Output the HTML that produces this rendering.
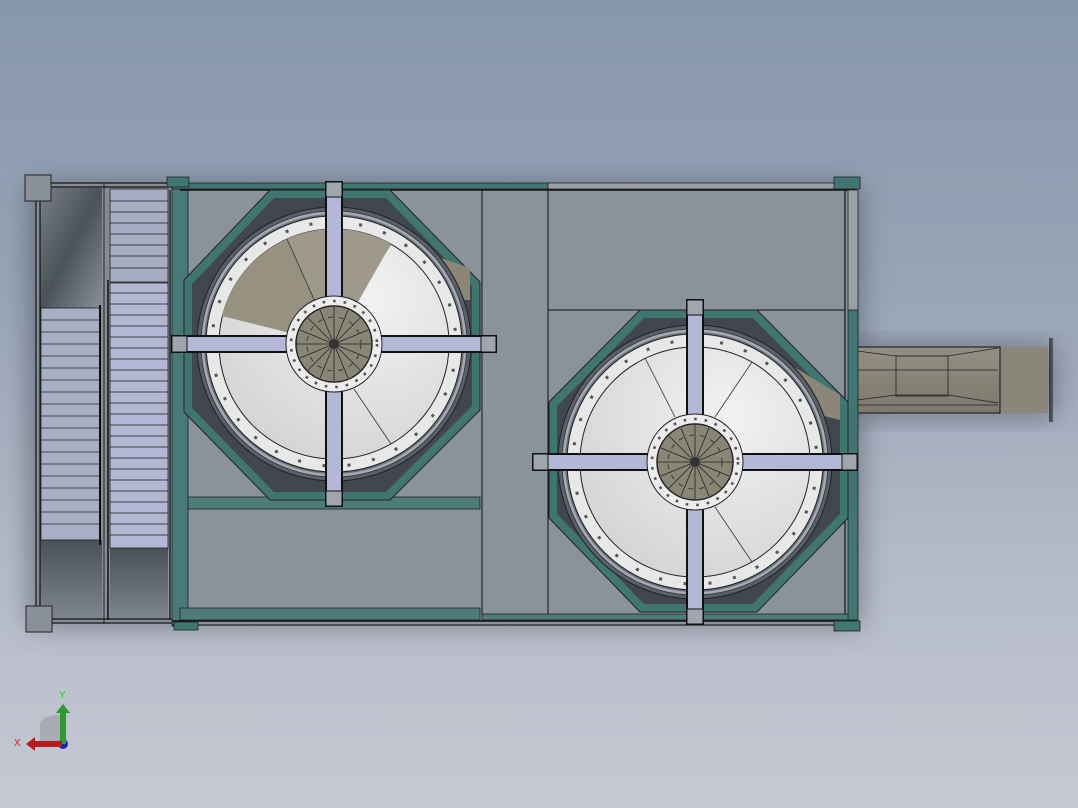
<!DOCTYPE html>
<html><head><meta charset="utf-8"><style>
html,body{margin:0;padding:0;width:1078px;height:808px;overflow:hidden;}
body{background:linear-gradient(180deg,#8797ac 0%,#98a4b6 35%,#b4bac8 70%,#c6c9d3 100%);}
svg{display:block;font-family:"Liberation Sans",sans-serif;}
</style></head><body>
<svg width="1078" height="808" viewBox="0 0 1078 808" xmlns="http://www.w3.org/2000/svg">
<defs>
<filter id="sh" x="-20%" y="-20%" width="140%" height="140%"><feGaussianBlur stdDeviation="14"/></filter>
<linearGradient id="dk" x1="0" y1="0" x2="1" y2="1"><stop offset="0" stop-color="#7a808a"/><stop offset="0.5" stop-color="#4c5259"/><stop offset="1" stop-color="#8a9099"/></linearGradient>
<linearGradient id="dk2" x1="0" y1="0" x2="0" y2="1"><stop offset="0" stop-color="#4a5058"/><stop offset="1" stop-color="#80868f"/></linearGradient>
<linearGradient id="duct" x1="0" y1="0" x2="0" y2="1"><stop offset="0" stop-color="#938f82"/><stop offset="1" stop-color="#7c786c"/></linearGradient>
<radialGradient id="disc" cx="0.65" cy="0.3" r="0.9"><stop offset="0" stop-color="#f2f2f2"/><stop offset="1" stop-color="#cfcfcf"/></radialGradient>
<g id="fanbase">
  <circle r="137" fill="#5a606a" stroke="#222" stroke-width="1"/>
  <circle r="133" fill="#a4aab4" stroke="#333" stroke-width="0.8"/>
  <circle r="130" fill="#6a7079"/>
  <circle r="128" fill="#e8e8e8" stroke="#222" stroke-width="1"/>
  <circle r="122" fill="none" stroke="#555" stroke-width="3" stroke-dasharray="3 22"/>
  <circle r="115" fill="url(#disc)" stroke="#222" stroke-width="1"/>
  <line x1="20" y1="-45" x2="57" y2="-100" stroke="#333" stroke-width="0.8"/>
  <line x1="20" y1="45" x2="57" y2="100" stroke="#333" stroke-width="0.8"/>
  <line x1="-20" y1="-45" x2="-50" y2="-104" stroke="#333" stroke-width="0.8"/>
</g>
<g id="fantop">
  <rect x="-8" y="-162" width="16" height="324" fill="#b3b8d6" stroke="#111" stroke-width="2"/>
  <rect x="-162" y="-8" width="324" height="16" fill="#b3b8d6" stroke="#111" stroke-width="2"/>
  <rect x="-8" y="-162" width="16" height="15" fill="#a0a6ae" stroke="#111" stroke-width="1"/>
  <rect x="-8" y="147" width="16" height="15" fill="#a0a6ae" stroke="#111" stroke-width="1"/>
  <rect x="-162" y="-8" width="15" height="16" fill="#a0a6ae" stroke="#111" stroke-width="1"/>
  <rect x="147" y="-8" width="15" height="16" fill="#a0a6ae" stroke="#111" stroke-width="1"/>
  <circle r="48" fill="#ececec" stroke="#222" stroke-width="1"/>
  <circle r="43" fill="none" stroke="#555" stroke-width="2.6" stroke-dasharray="2.6 8"/>
  <circle r="38" fill="#8a8676" stroke="#222" stroke-width="1.5"/>
  <g stroke="#222" stroke-width="0.8">
    <line x1="0" y1="-37" x2="0" y2="37"/><line x1="-37" y1="0" x2="37" y2="0"/>
    <line x1="-26" y1="-26" x2="26" y2="26"/><line x1="-26" y1="26" x2="26" y2="-26"/>
    <line x1="-14" y1="-34" x2="14" y2="34"/><line x1="14" y1="-34" x2="-14" y2="34"/>
    <line x1="-34" y1="-14" x2="34" y2="14"/><line x1="-34" y1="14" x2="34" y2="-14"/>
  </g>
  <circle r="27" fill="none" stroke="#3a3a34" stroke-width="1" stroke-dasharray="5 6"/>
  <circle r="5" fill="#333"/>
</g>
</defs>

<rect x="30" y="185" width="830" height="440" fill="#3c4450" opacity="0.55" filter="url(#sh)"/>
<rect x="850" y="345" width="205" height="72" fill="#3c4450" opacity="0.5" filter="url(#sh)"/>

<!-- duct -->
<rect x="855" y="347" width="145" height="66" fill="url(#duct)" stroke="#111" stroke-width="1"/>
<rect x="1000" y="347" width="48" height="66" fill="#8a867a"/>
<line x1="1000" y1="346" x2="1000" y2="414" stroke="#111"/>
<line x1="1050" y1="338" x2="1050" y2="422" stroke="#111" stroke-width="1.2"/>
<line x1="1052" y1="338" x2="1052" y2="422" stroke="#111" stroke-width="1"/>
<g stroke="#222" stroke-width="0.8" fill="none">
<path d="M857 351 L896 356 L948 356 L998 348"/>
<path d="M857 400 L896 395 L948 395 L998 403"/>
<line x1="857" y1="370" x2="998" y2="370"/>
<rect x="896" y="356" width="52" height="40"/>
<line x1="857" y1="405" x2="998" y2="405"/>
</g>

<!-- LEFT SECTION -->
<rect x="36" y="183" width="138" height="440" fill="#868c95"/>
<rect x="40" y="188" width="62" height="120" fill="url(#dk)"/>
<rect x="40" y="540" width="62" height="80" fill="url(#dk2)"/>
<rect x="110" y="548" width="58" height="72" fill="url(#dk2)"/>
<rect x="41" y="308" width="59" height="232" fill="#a8aec4" stroke="#222" stroke-width="0.8"/>
<g stroke="#2a2a2a" stroke-width="0.8">
<line x1="41" y1="320" x2="100" y2="320"/><line x1="41" y1="332" x2="100" y2="332"/><line x1="41" y1="344" x2="100" y2="344"/><line x1="41" y1="356" x2="100" y2="356"/><line x1="41" y1="368" x2="100" y2="368"/><line x1="41" y1="380" x2="100" y2="380"/><line x1="41" y1="392" x2="100" y2="392"/><line x1="41" y1="404" x2="100" y2="404"/><line x1="41" y1="416" x2="100" y2="416"/><line x1="41" y1="428" x2="100" y2="428"/><line x1="41" y1="440" x2="100" y2="440"/><line x1="41" y1="452" x2="100" y2="452"/><line x1="41" y1="464" x2="100" y2="464"/><line x1="41" y1="476" x2="100" y2="476"/><line x1="41" y1="488" x2="100" y2="488"/><line x1="41" y1="500" x2="100" y2="500"/><line x1="41" y1="512" x2="100" y2="512"/><line x1="41" y1="524" x2="100" y2="524"/>
</g>
<rect x="110" y="189" width="58" height="93" fill="#a6acc2" stroke="#222" stroke-width="0.8"/>
<rect x="110" y="283" width="58" height="265" fill="#b2b7d4" stroke="#222" stroke-width="0.8"/>
<g stroke="#1a1a1a" stroke-width="0.8">
<line x1="110" y1="201" x2="168" y2="201"/><line x1="110" y1="212" x2="168" y2="212"/><line x1="110" y1="223" x2="168" y2="223"/><line x1="110" y1="234" x2="168" y2="234"/><line x1="110" y1="245" x2="168" y2="245"/><line x1="110" y1="256" x2="168" y2="256"/><line x1="110" y1="268" x2="168" y2="268"/>
<line x1="110" y1="293" x2="168" y2="293"/><line x1="110" y1="304" x2="168" y2="304"/><line x1="110" y1="315" x2="168" y2="315"/><line x1="110" y1="326" x2="168" y2="326"/><line x1="110" y1="337" x2="168" y2="337"/><line x1="110" y1="348" x2="168" y2="348"/><line x1="110" y1="359" x2="168" y2="359"/><line x1="110" y1="370" x2="168" y2="370"/><line x1="110" y1="381" x2="168" y2="381"/><line x1="110" y1="392" x2="168" y2="392"/><line x1="110" y1="403" x2="168" y2="403"/><line x1="110" y1="414" x2="168" y2="414"/><line x1="110" y1="425" x2="168" y2="425"/><line x1="110" y1="436" x2="168" y2="436"/><line x1="110" y1="447" x2="168" y2="447"/><line x1="110" y1="458" x2="168" y2="458"/><line x1="110" y1="469" x2="168" y2="469"/><line x1="110" y1="480" x2="168" y2="480"/><line x1="110" y1="491" x2="168" y2="491"/><line x1="110" y1="502" x2="168" y2="502"/><line x1="110" y1="513" x2="168" y2="513"/><line x1="110" y1="524" x2="168" y2="524"/><line x1="110" y1="535" x2="168" y2="535"/>
</g>
<g fill="none" stroke="#111" stroke-width="1.2">
<rect x="36" y="183" width="138" height="440"/>
<line x1="40" y1="188" x2="40" y2="620"/>
<line x1="36" y1="187" x2="174" y2="187"/>
<line x1="36" y1="619" x2="174" y2="619"/>
<line x1="100" y1="305" x2="100" y2="545" stroke-width="2"/>
<line x1="108" y1="280" x2="108" y2="620" stroke-width="1.5"/>
<line x1="104" y1="183" x2="104" y2="623" stroke-width="0.8"/>
<line x1="170" y1="190" x2="170" y2="620"/>
</g>
<rect x="25" y="175" width="26" height="26" fill="#8a9099" stroke="#222"/>
<rect x="26" y="606" width="26" height="26" fill="#8a9099" stroke="#222"/>

<!-- MAIN BOX -->
<rect x="172" y="183" width="686" height="443" fill="#8a929b"/>
<rect x="172" y="183" width="16" height="443" fill="#477a78" stroke="#222" stroke-width="0.8"/>
<rect x="172" y="183" width="376" height="6" fill="#3f7672" stroke="#222" stroke-width="0.8"/>
<rect x="548" y="183" width="307" height="6" fill="#9aa0a8" stroke="#222" stroke-width="0.8"/>
<line x1="180" y1="190" x2="855" y2="190" stroke="#111" stroke-width="1.5"/>
<rect x="848" y="310" width="10" height="310" fill="#3f7672" stroke="#222" stroke-width="0.8"/>
<rect x="848" y="190" width="10" height="120" fill="#9aa0a8" stroke="#222" stroke-width="0.8"/>
<line x1="845" y1="190" x2="845" y2="618" stroke="#111" stroke-width="1.2"/>
<line x1="482" y1="190" x2="482" y2="615" stroke="#111" stroke-width="1"/>
<line x1="548" y1="190" x2="548" y2="615" stroke="#111" stroke-width="1"/>
<line x1="548" y1="310" x2="845" y2="310" stroke="#111" stroke-width="1"/>
<rect x="188" y="497" width="292" height="12" fill="#4d7c7a" stroke="#222" stroke-width="0.8"/>
<rect x="180" y="608" width="300" height="12" fill="#4d7c7a" stroke="#222" stroke-width="0.8"/>
<rect x="482" y="614" width="366" height="6" fill="#4d7c7a" stroke="#222" stroke-width="0.8"/>
<line x1="172" y1="621" x2="858" y2="621" stroke="#111" stroke-width="1.5"/>
<line x1="172" y1="625" x2="858" y2="625" stroke="#111" stroke-width="1"/>
<rect x="167" y="177" width="22" height="10" fill="#3f7672" stroke="#222" stroke-width="0.8"/>
<rect x="834" y="177" width="26" height="12" fill="#3f7672" stroke="#222" stroke-width="0.8"/>
<rect x="834" y="621" width="26" height="10" fill="#3f7672" stroke="#222" stroke-width="0.8"/>
<rect x="174" y="622" width="24" height="8" fill="#3f7672" stroke="#222" stroke-width="0.8"/>

<!-- fan 1 octagon -->
<polygon points="270,190 390,190 480,282 480,410 390,500 270,500 184,412 184,280" fill="#3f7672" stroke="#222"/>
<polygon points="274,198 386,198 472,286 472,406 386,492 274,492 192,408 192,284" fill="#42474f"/>
<path d="M375 235 L470 268 L470 300 L440 300 Z" fill="#8b8677"/>
<!-- fan 2 octagon -->
<polygon points="640,310 757,310 848,402 848,518 757,612 640,612 549,518 549,402" fill="#3f7672" stroke="#222"/>
<polygon points="644,318 753,318 840,406 840,514 753,604 644,604 557,514 557,406" fill="#42474f"/>
<path d="M750 340 L840 395 L840 420 L800 410 Z" fill="#8b8677"/>

<use href="#fanbase" transform="translate(334,344)"/>
<path d="M334 344 L287 239 A115 115 0 0 1 391 244 Z" fill="#9e998b"/>
<path d="M334 344 L222 316 A115 115 0 0 1 287 239 Z" fill="#97927f"/>
<line x1="334" y1="344" x2="287" y2="239" stroke="#333" stroke-width="0.8"/>
<use href="#fantop" transform="translate(334,344)"/>

<use href="#fanbase" transform="translate(695,462)"/>
<use href="#fantop" transform="translate(695,462)"/>

<!-- axis triad -->
<path d="M40 744 L40 722 A22 22 0 0 1 62 716 L62 744 Z" fill="#a8abb2"/>
<circle cx="63" cy="744" r="5" fill="#1822b8"/>
<rect x="60" y="712" width="6" height="32" fill="#2c9a2c"/>
<polygon points="56,713 63,704 70,713" fill="#2c9a2c"/>
<rect x="34" y="741" width="28" height="6" fill="#b31c1c"/>
<polygon points="35,737 26,744 35,751" fill="#b31c1c"/>
<text x="59" y="698" font-size="10" fill="#22cc22">Y</text>
<text x="14" y="746" font-size="10" fill="#dd2222">X</text>
</svg>
</body></html>
